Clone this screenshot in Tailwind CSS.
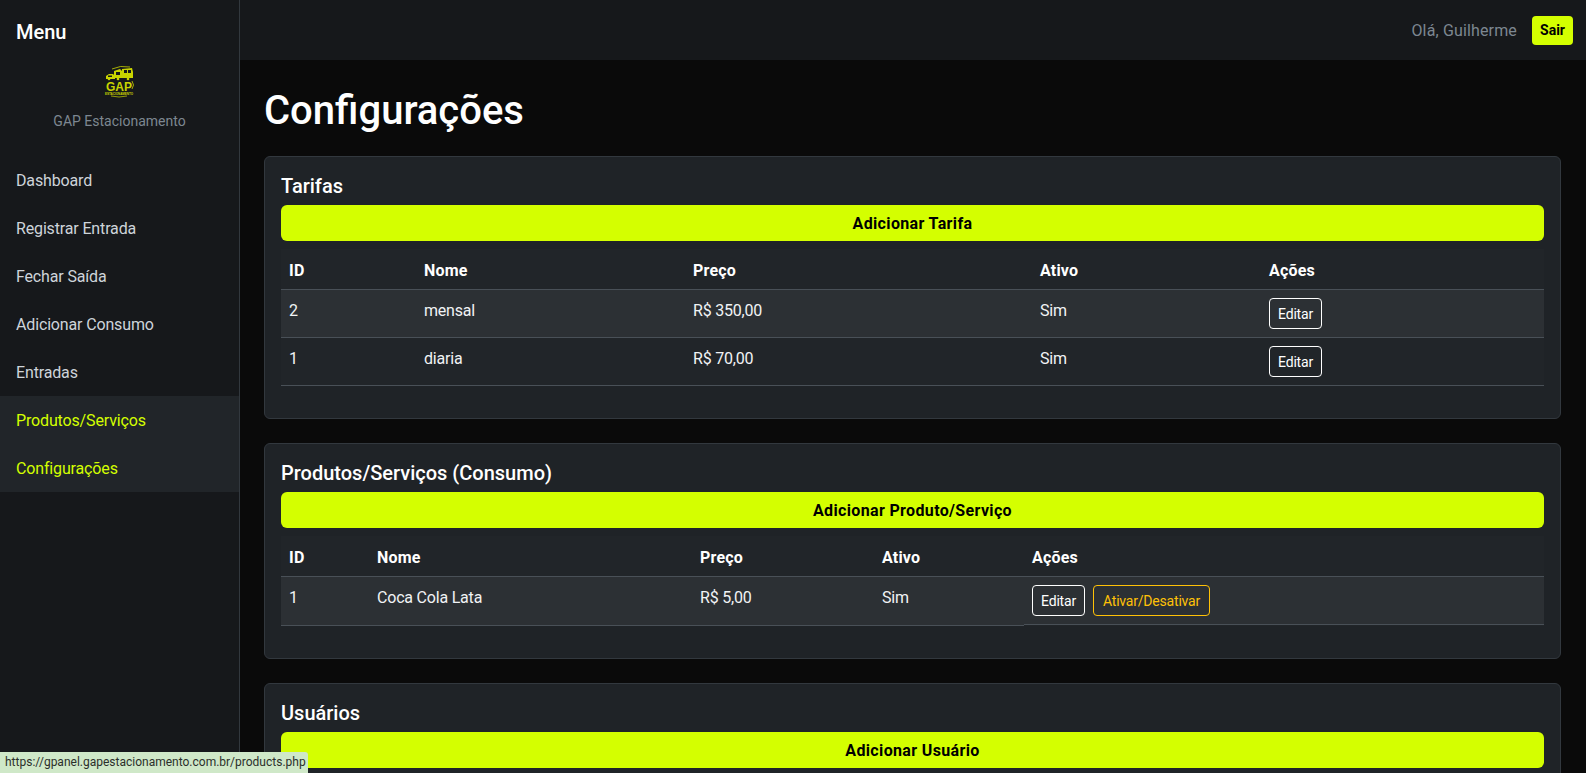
<!DOCTYPE html>
<html lang="pt-BR">
<head>
  <meta charset="UTF-8">
  <meta name="viewport" content="width=device-width, initial-scale=1.0">
  <title>Configurações | GAP Estacionamento</title>
  <script src="https://cdn.jsdelivr.net/npm/@tailwindcss/browser@4"></script>
</head>
<body class="bg-[#0a0a0a] text-white font-['Roboto',sans-serif]">
  <div class="relative flex h-[773px] overflow-hidden">

    <!-- sidebar -->
    <aside class="w-[240px] shrink-0 bg-[#16181b] border-r border-[#32383e]">
      <div class="px-4 pt-[17px] pb-px text-[20px] leading-[30px] font-medium">Menu</div>
      <div class="mt-[18px] flex flex-col items-center">
        <svg width="32" height="33" viewBox="0 0 32 33" class="block">
          <g fill="#c9d400">
            <!-- carro e caminhoes -->
            <path d="M2 13 L2 10 L5 8 L9 8 L11 10 L11 13 Z"/>
            <path d="M10 12 L10 5 L16 3 L18 5 L18 12 Z"/>
            <path d="M18 12 L18 3 L28 2 L29 6 L29 12 Z"/>
            <path d="M8 3 Q16 -1 26 1" fill="none" stroke="#c9d400" stroke-width=".8"/>
            <rect x="12" y="6" width="4" height="3" fill="#16181b"/>
            <rect x="20" y="4" width="3" height="3" fill="#16181b"/>
            <rect x="24" y="4" width="3" height="3" fill="#16181b"/>
            <rect x="4" y="9.5" width="4" height="1.5" fill="#16181b"/>
            <circle cx="5" cy="13" r="1.3"/>
            <circle cx="14" cy="13" r="1.3"/>
            <circle cx="24" cy="13" r="1.3"/>
            <text x="15" y="24.5" text-anchor="middle" font-family="Liberation Sans, sans-serif" font-weight="700" font-size="12">GAP</text>
            <path d="M28 15 Q31 19 28 23" fill="none" stroke="#c9d400" stroke-width=".8"/>
            <text x="15" y="28.5" text-anchor="middle" font-family="Liberation Sans, sans-serif" font-weight="700" font-size="3">ESTACIONAMENTO</text>
            <path d="M7 30 Q15 32 23 30" fill="none" stroke="#c9d400" stroke-width=".7"/>
          </g>
        </svg>
        <p class="mt-[12px] text-[14px] leading-[21px] text-[#7d8791]">GAP Estacionamento</p>
      </div>
      <nav class="mt-[24px] text-[16px] leading-[24px] tracking-[-0.15px] text-[#ced4da]">
        <a href="#" class="block px-4 pt-[13px] pb-[11px]">Dashboard</a>
        <a href="#" class="block px-4 pt-[13px] pb-[11px]">Registrar Entrada</a>
        <a href="#" class="block px-4 pt-[13px] pb-[11px]">Fechar Saída</a>
        <a href="#" class="block px-4 pt-[13px] pb-[11px]">Adicionar Consumo</a>
        <a href="#" class="block px-4 pt-[13px] pb-[11px]">Entradas</a>
        <a href="#" class="block px-4 pt-[13px] pb-[11px] bg-[#212529] text-[#d4ff00]">Produtos/Serviços</a>
        <a href="#" class="block px-4 pt-[13px] pb-[11px] bg-[#212529] text-[#d4ff00]">Configurações</a>
      </nav>
    </aside>

    <div class="flex-1 min-w-0">
      <!-- topo -->
      <header class="h-[60px] bg-[#16181b] flex items-center justify-end gap-[15px] pr-[13px]">
        <span class="pt-[2px] text-[16px] tracking-[0.15px] text-[#7d8791]">Olá, Guilherme</span>
        <button class="h-[29px] w-[41px] rounded-[4px] bg-[#d4ff00] text-black text-[14px] font-bold">Sair</button>
      </header>

      <main class="pl-[24px] pr-[25px] pt-[27px]">
        <h1 class="text-[40px] leading-[48px] font-medium mb-[21px]">Configurações</h1>

        <section class="mb-[24px] rounded-[6px] border border-[#32383e] bg-[#1f2327] p-4">
          <h2 class="pt-[2px] text-[20px] leading-[23px] font-medium mb-[7px]">Tarifas</h2>
          <button class="w-full h-[36px] pt-[2px] rounded-[6px] bg-[#d4ff00] text-black text-[16px] font-bold tracking-[0.35px]">Adicionar Tarifa</button>
          <table class="mt-2 mb-4 w-full table-fixed border-collapse bg-[#212529] text-[16px] leading-[24px] text-left">
            <colgroup>
              <col class="w-[135px]"><col class="w-[269px]"><col class="w-[347px]"><col class="w-[229px]"><col>
            </colgroup>
            <thead>
              <tr class="border-b border-[#495057]">
                <th class="px-2 pt-[10px] pb-[6px] font-bold tracking-[0.2px]">ID</th><th class="px-2 pt-[10px] pb-[6px] font-bold tracking-[0.2px]">Nome</th><th class="px-2 pt-[10px] pb-[6px] font-bold tracking-[0.2px]">Preço</th><th class="px-2 pt-[10px] pb-[6px] font-bold tracking-[0.2px]">Ativo</th><th class="px-2 pt-[10px] pb-[6px] font-bold tracking-[0.2px]">Ações</th>
              </tr>
            </thead>
            <tbody class="text-[#f1f3f5] tracking-[-0.2px]">
              <tr class="border-b border-[#495057] bg-[#2c3034] align-top">
                <td class="px-2 pt-[9px] pb-[7px]">2</td><td class="px-2 pt-[9px] pb-[7px]">mensal</td><td class="px-2 pt-[9px] pb-[7px]">R$ 350,00</td><td class="px-2 pt-[9px] pb-[7px]">Sim</td>
                <td class="p-2"><button class="block h-[31px] w-[53px] rounded-[4px] border border-white text-[14px] text-white">Editar</button></td>
              </tr>
              <tr class="border-b border-[#495057] align-top">
                <td class="px-2 pt-[9px] pb-[7px]">1</td><td class="px-2 pt-[9px] pb-[7px]">diaria</td><td class="px-2 pt-[9px] pb-[7px]">R$ 70,00</td><td class="px-2 pt-[9px] pb-[7px]">Sim</td>
                <td class="p-2"><button class="block h-[31px] w-[53px] rounded-[4px] border border-white text-[14px] text-white">Editar</button></td>
              </tr>
            </tbody>
          </table>
        </section>

        <section class="mb-[24px] rounded-[6px] border border-[#32383e] bg-[#1f2327] p-4">
          <h2 class="pt-[2px] text-[20px] leading-[23px] font-medium mb-[7px]">Produtos/Serviços (Consumo)</h2>
          <button class="w-full h-[36px] pt-[2px] rounded-[6px] bg-[#d4ff00] text-black text-[16px] font-bold tracking-[0.35px]">Adicionar Produto/Serviço</button>
          <table class="mt-2 mb-4 w-full table-fixed border-separate border-spacing-0 bg-[#212529] text-[16px] leading-[24px] text-left">
            <colgroup>
              <col class="w-[88px]"><col class="w-[323px]"><col class="w-[182px]"><col class="w-[150px]"><col>
            </colgroup>
            <thead>
              <tr>
                <th class="border-b border-[#495057] px-2 pt-[10px] pb-[6px] font-bold tracking-[0.2px]">ID</th><th class="border-b border-[#495057] px-2 pt-[10px] pb-[6px] font-bold tracking-[0.2px]">Nome</th><th class="border-b border-[#495057] px-2 pt-[10px] pb-[6px] font-bold tracking-[0.2px]">Preço</th><th class="border-b border-[#495057] px-2 pt-[10px] pb-[6px] font-bold tracking-[0.2px]">Ativo</th><th class="border-b border-[#495057] px-2 pt-[10px] pb-[6px] font-bold tracking-[0.2px]">Ações</th>
              </tr>
            </thead>
            <tbody class="text-[#f1f3f5] tracking-[-0.2px]">
              <tr class="bg-[#2c3034] align-top">
                <td class="border-b border-[#495057] px-2 pt-[9px] pb-[7px]">1</td><td class="border-b border-[#495057] px-2 pt-[9px] pb-[7px]">Coca Cola Lata</td><td class="border-b border-[#495057] px-2 pt-[9px] pb-[7px]">R$ 5,00</td><td class="border-b border-[#495057] px-2 pt-[9px] pb-[7px]">Sim</td>
                <!-- a linha desta celula fica 1px acima das outras -->
                <td class="h-[49px] border-b border-[#212529] p-2 shadow-[inset_0_-1px_0_0_#495057]">
                  <div class="flex gap-2">
                    <button class="h-[31px] w-[53px] rounded-[4px] border border-white text-[14px] text-white">Editar</button>
                    <button class="h-[31px] w-[117px] rounded-[4px] border border-[#ffc107] text-[14px] text-[#ffc107]">Ativar/Desativar</button>
                  </div>
                </td>
              </tr>
            </tbody>
          </table>
        </section>

        <section class="rounded-[6px] border border-[#32383e] bg-[#1f2327] p-4">
          <h2 class="pt-[2px] text-[20px] leading-[23px] font-medium mb-[7px]">Usuários</h2>
          <button class="w-full h-[36px] pt-[2px] rounded-[6px] bg-[#d4ff00] text-black text-[16px] font-bold tracking-[0.35px]">Adicionar Usuário</button>
        </section>
      </main>
    </div>

    <!-- barra de status do navegador -->
    <div class="absolute left-0 bottom-0 h-[21px] w-[308px] rounded-tr-[3px] bg-[#cfe8c8] pl-[5px] text-[12px] leading-[21px] text-[#2b2f2b] whitespace-nowrap">https://gpanel.gapestacionamento.com.br/products.php</div>
  </div>
</body>
</html>
